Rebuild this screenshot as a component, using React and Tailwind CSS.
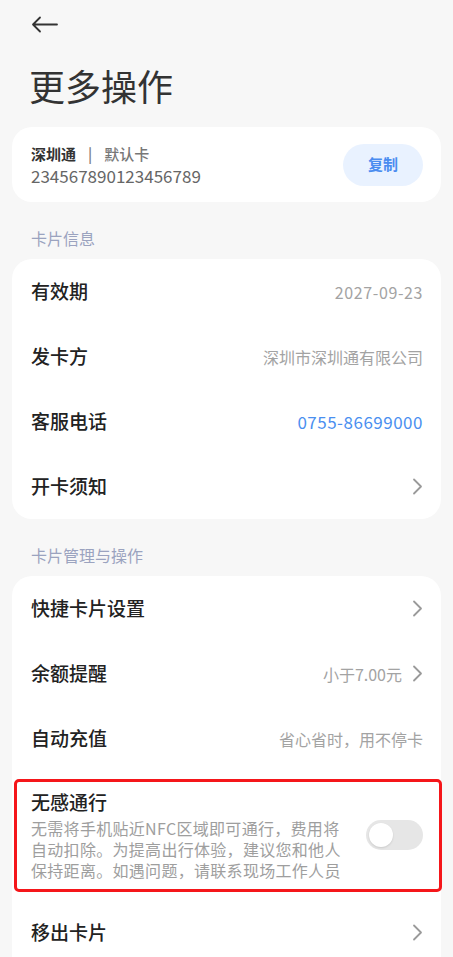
import React from 'react'

const font = { fontFamily: '"Noto Sans CJK SC", "Noto Sans", sans-serif' }

const Chevron = () => (
  <svg width="11" height="17" viewBox="0 0 11 17" fill="none" className="shrink-0">
    <path d="M2 1.5 L9 8.5 L2 15.5" stroke="#9a9a9a" strokeWidth="1.8" strokeLinecap="round" strokeLinejoin="round" />
  </svg>
)

const Row = ({ label, children }) => (
  <div className="flex h-[65px] items-center justify-between pl-[19px] pr-[18px]">
    <span className="text-[19px] font-medium text-[#222]">{label}</span>
    <div className="flex items-center gap-[10px]">{children}</div>
  </div>
)

const SectionLabel = ({ children }) => (
  <div className="mt-[24px] mb-[9px] px-[19px] text-[16px] leading-[24px] text-[#9ba3bf]">{children}</div>
)

export default function App() {
  const [passOn, setPassOn] = React.useState(false)

  return (
    <div className="min-h-screen bg-[#f7f7f7] px-[12px]" style={font}>
      {/* header */}
      <div className="pt-[16px] pl-[19px]">
        <svg width="27" height="17" viewBox="0 0 27 17" fill="none">
          <path d="M26 8.5 H2 M9 1.5 L2 8.5 L9 15.5" stroke="#333" strokeWidth="1.8" strokeLinecap="round" strokeLinejoin="round" />
        </svg>
      </div>
      <h1 className="mt-[30px] pl-[17px] text-[36px] font-normal leading-[44px] text-[#333]">更多操作</h1>

      {/* card summary */}
      <div className="mt-[20px] flex h-[75px] items-center justify-between rounded-[20px] bg-white pl-[19px] pr-[18px]">
        <div className="flex flex-col">
          <div className="flex items-center text-[15px] leading-[22px]">
            <span className="font-bold text-[#333]">深圳通</span>
            <span className="mx-[12px] font-medium text-[#777]">|</span>
            <span className="font-medium text-[#777]">默认卡</span>
          </div>
          <span className="text-[17px] leading-[22px] text-[#666]">234567890123456789</span>
        </div>
        <button className="flex h-[42px] w-[80px] items-center justify-center rounded-full bg-[#e9f2ff] text-[15px] font-bold text-[#4a8cf0]">
          复制
        </button>
      </div>

      <SectionLabel>卡片信息</SectionLabel>
      <div className="rounded-[20px] bg-white">
        <Row label="有效期">
          <span className="text-[16px] tracking-[0.6px] text-[#a3a3a3]">2027-09-23</span>
        </Row>
        <Row label="发卡方">
          <span className="text-[16px] text-[#a3a3a3]">深圳市深圳通有限公司</span>
        </Row>
        <Row label="客服电话">
          <span className="text-[17px] tracking-[0.5px] text-[#4a8ff0]">0755-86699000</span>
        </Row>
        <Row label="开卡须知">
          <Chevron />
        </Row>
      </div>

      <SectionLabel>卡片管理与操作</SectionLabel>
      <div className="rounded-t-[20px] bg-white">
        <Row label="快捷卡片设置">
          <Chevron />
        </Row>
        <Row label="余额提醒">
          <span className="text-[16px] text-[#a3a3a3]">小于7.00元</span>
          <Chevron />
        </Row>
        <Row label="自动充值">
          <span className="text-[16px] text-[#a3a3a3]">省心省时，用不停卡</span>
        </Row>

        <div className="py-[8px] pl-[2px] -mr-[1px]">
          <div className="flex items-center justify-between rounded-[5px] border-[3px] border-[#f5161a] pt-[7px] pb-[8px] pl-[14px] pr-[16px]">
            <div className="flex flex-col">
              <span className="text-[19px] font-medium leading-[26px] text-[#222]">无感通行</span>
              <div className="mt-[3px] flex flex-col text-[16px] leading-[21px] tracking-[0.3px] text-[#9e9e9e]">
                <span>无需将手机贴近NFC区域即可通行，费用将</span>
                <span>自动扣除。为提高出行体验，建议您和他人</span>
                <span>保持距离。如遇问题，请联系现场工作人员</span>
              </div>
            </div>
            <button
              onClick={() => setPassOn(!passOn)}
              className={`flex h-[30px] w-[57px] shrink-0 items-center rounded-full px-[3px] ${
                passOn ? 'justify-end bg-[#4a8cf0]' : 'justify-start bg-[#e6e6e6]'
              }`}
            >
              <span className="h-[24px] w-[24px] rounded-full bg-white shadow-[0_1px_2px_rgba(0,0,0,0.12)]" />
            </button>
          </div>
        </div>

        <Row label="移出卡片">
          <Chevron />
        </Row>
      </div>
    </div>
  )
}
